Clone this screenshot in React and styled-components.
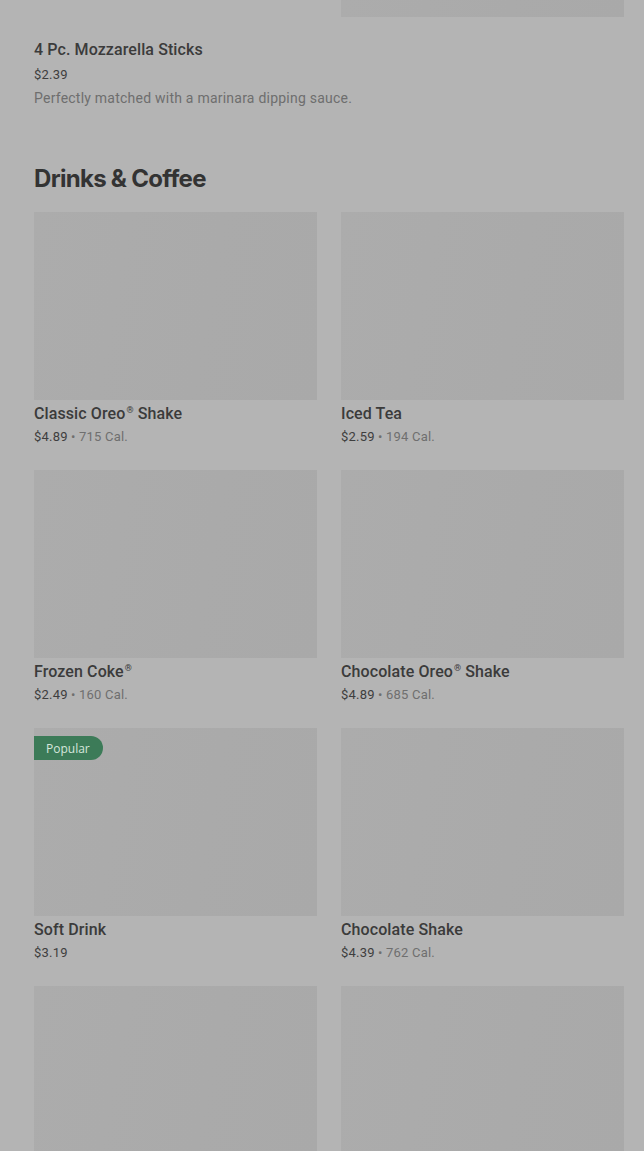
import styled, { createGlobalStyle } from 'styled-components';

const drinks = [
  { name: 'Classic Oreo® Shake', price: '$4.89', cal: '715 Cal.' },
  { name: 'Iced Tea', price: '$2.59', cal: '194 Cal.' },
  { name: 'Frozen Coke®', price: '$2.49', cal: '160 Cal.' },
  { name: 'Chocolate Oreo® Shake', price: '$4.89', cal: '685 Cal.' },
  { name: 'Soft Drink', price: '$3.19', popular: true },
  { name: 'Chocolate Shake', price: '$4.39', cal: '762 Cal.' },
  { name: '', price: '' },
  { name: '', price: '' },
];

// ® sits raised and small in the source
function Name({ text }) {
  const parts = text.split('®');
  return parts.map((part, i) => (
    <span key={i}>
      {part}
      {i < parts.length - 1 && <Reg>®</Reg>}
    </span>
  ));
}

export default function App() {
  return (
    <Page>
      <GlobalStyle />
      <Grid>
        <div />
        <Photo $height={17} />
      </Grid>
      <Feature>
        <ItemName>4 Pc. Mozzarella Sticks</ItemName>
        <Price $top={6}>$2.39</Price>
        <Description>Perfectly matched with a marinara dipping sauce.</Description>
      </Feature>
      <SectionTitle>Drinks &amp; Coffee</SectionTitle>
      <Grid $gap={24}>
        {drinks.map((item, i) => (
          <Card key={i}>
            <Photo $height={188}>
              {item.popular && <Badge>Popular</Badge>}
            </Photo>
            {item.name && (
              <>
                <ItemName $top={4}>
                  <Name text={item.name} />
                </ItemName>
                <Price $top={4}>
                  {item.price}
                  {item.cal && <Cal> • {item.cal}</Cal>}
                </Price>
              </>
            )}
          </Card>
        ))}
      </Grid>
    </Page>
  );
}

const GlobalStyle = createGlobalStyle`
  body {
    margin: 0;
    background: #b4b4b4;
    font-family: Roboto, "Liberation Sans", sans-serif;
  }
`;

const Page = styled.div`
  padding: 0 20px 0 34px;
  height: 1151px;
  overflow: hidden;
  background: #b4b4b4;
`;

const Grid = styled.div`
  display: grid;
  grid-template-columns: 283px 283px;
  column-gap: 24px;
  row-gap: ${(p) => p.$gap || 0}px;
`;

const Photo = styled.div`
  position: relative;
  height: ${(p) => p.$height}px;
  background: linear-gradient(100deg, #acacac 0%, #aaaaaa 60%, #a9a9a9 100%);
`;

const Feature = styled.div`
  display: flex;
  flex-direction: column;
  padding-top: 23px;
`;

const ItemName = styled.div`
  margin-top: ${(p) => p.$top || 0}px;
  font-size: 16px;
  line-height: 20px;
  font-weight: 500;
  letter-spacing: 0.1px;
  color: #3b3b3b;
`;

const Reg = styled.sup`
  font-size: 9px;
  line-height: 0;
  vertical-align: 6px;
  margin-left: 1px;
`;

const Price = styled.div`
  margin-top: ${(p) => p.$top || 5}px;
  font-size: 13px;
  line-height: 18px;
  letter-spacing: 0.2px;
  color: #3e3e3e;
`;

const Cal = styled.span`
  color: #6f6f6f;
`;

const Description = styled.div`
  margin-top: 4px;
  font-size: 14px;
  line-height: 20px;
  letter-spacing: 0.23px;
  color: #6e6e6e;
`;

const SectionTitle = styled.h2`
  margin: 55px 0 17px;
  font-family: Inter, "Liberation Sans", sans-serif;
  font-size: 24px;
  line-height: 32px;
  font-weight: 700;
  letter-spacing: -0.7px;
  color: #333333;
`;

const Card = styled.div`
  display: flex;
  flex-direction: column;
`;

const Badge = styled.span`
  position: absolute;
  left: 0;
  top: 8px;
  height: 24px;
  padding: 0 13px 0 12px;
  display: flex;
  align-items: center;
  border-radius: 0 12px 12px 0;
  background: #3c7b58;
  color: #d6e6dc;
  font-family: "Open Sans", sans-serif;
  font-size: 12px;
`;
